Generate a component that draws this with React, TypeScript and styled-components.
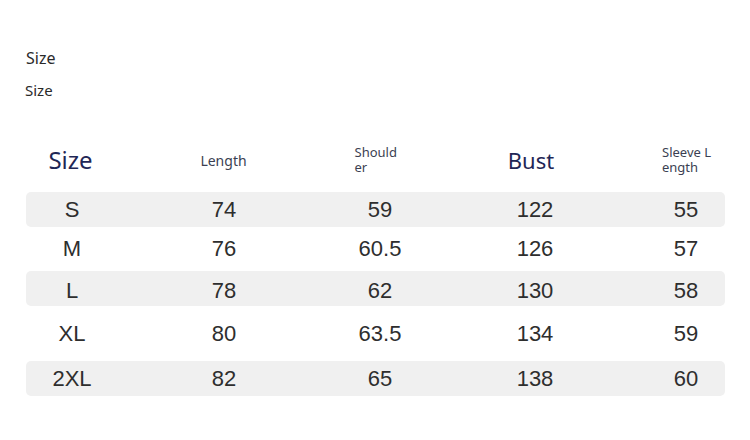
import React from "react";
import styled, { createGlobalStyle } from "styled-components";

const GlobalStyle = createGlobalStyle`
  html, body {
    margin: 0;
    padding: 0;
    background: #ffffff;
  }
  body {
    font-family: "Noto Sans", "Open Sans", sans-serif;
  }
`;

const Page = styled.div`
  width: 750px;
  height: 440px;
  box-sizing: border-box;
  padding: 48px 0 0 26px;
  display: flex;
  flex-direction: column;
`;

const Label = styled.div<{ $size: number; $shift?: number }>`
  font-family: "Noto Sans", sans-serif;
  font-size: ${(p) => p.$size}px;
  line-height: 20px;
  color: #2a2a2a;
  margin-left: ${(p) => p.$shift ?? 0}px;
`;

const Labels = styled.div`
  display: flex;
  flex-direction: column;
  gap: 12px;
`;

const Table = styled.div`
  width: 699px;
  margin-top: 42px;
  display: flex;
  flex-direction: column;
`;

const cols = "92px 212px 100px 210px 92px";

const HeaderRow = styled.div`
  display: grid;
  grid-template-columns: ${cols};
  height: 36px;
  align-items: center;
  justify-items: center;
  margin-bottom: 14px;
`;

const BigHead = styled.div<{ $size: number; $dx?: number }>`
  font-family: "Noto Sans", sans-serif;
  font-size: ${(p) => p.$size}px;
  color: #1f2756;
  line-height: 1.3;
  margin-left: ${(p) => (p.$dx ?? 0) * 2}px;
`;

const SmallHead = styled.div<{ $w?: number; $size?: number; $dx?: number }>`
  font-family: "Noto Sans", sans-serif;
  font-size: ${(p) => p.$size ?? 13}px;
  line-height: 15px;
  color: #3b3f52;
  width: ${(p) => (p.$w ? `${p.$w}px` : "auto")};
  word-break: break-all;
  text-align: left;
  margin-left: ${(p) => (p.$dx ?? 0) * 2}px;
`;

const Row = styled.div<{ $shade: boolean; $h: number; $pt: number }>`
  display: grid;
  grid-template-columns: ${cols};
  height: ${(p) => p.$h}px;
  box-sizing: border-box;
  padding-top: ${(p) => p.$pt}px;
  align-items: center;
  justify-items: center;
  background: ${(p) => (p.$shade ? "#f0f0f0" : "transparent")};
  border-radius: 5px;
`;

const Cell = styled.div`
  font-family: "Liberation Sans", Arial, sans-serif;
  font-size: 22px;
  line-height: 26px;
  color: #2e2e2e;
`;

type RowData = { cells: string[]; h: number; pt: number };

const rows: RowData[] = [
  { cells: ["S", "74", "59", "122", "55"], h: 35, pt: 0 },
  { cells: ["M", "76", "60.5", "126", "57"], h: 44, pt: 0 },
  { cells: ["L", "78", "62", "130", "58"], h: 35, pt: 5 },
  { cells: ["XL", "80", "63.5", "134", "59"], h: 55, pt: 0 },
  { cells: ["2XL", "82", "65", "138", "60"], h: 35, pt: 1 },
];

export default function App() {
  return (
    <>
      <GlobalStyle />
      <Page>
        <Labels>
          <Label $size={16}>Size</Label>
          <Label $size={15} $shift={-1}>
            Size
          </Label>
        </Labels>
        <Table>
          <HeaderRow>
            <BigHead $size={24} $dx={-1.5}>Size</BigHead>
            <SmallHead $size={14} $dx={-0.5}>Length</SmallHead>
            <SmallHead $w={47} $dx={-2}>Shoulder</SmallHead>
            <BigHead $size={22} $dx={-4}>Bust</BigHead>
            <SmallHead $w={52} $dx={2}>Sleeve Length</SmallHead>
          </HeaderRow>
          {rows.map((r, i) => (
            <Row key={r.cells[0]} $shade={i % 2 === 0} $h={r.h} $pt={r.pt}>
              {r.cells.map((c, j) => (
                <Cell key={j}>{c}</Cell>
              ))}
            </Row>
          ))}
        </Table>
      </Page>
    </>
  );
}
